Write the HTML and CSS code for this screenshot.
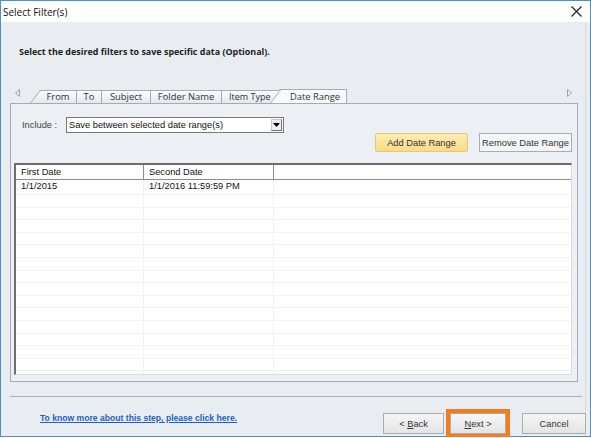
FILE: index.html
```html
<!DOCTYPE html>
<html lang="en">
<head>
    <meta charset="UTF-8">
    <title>Select Filter(s)</title>
    <link rel="stylesheet" href="styles.css">
</head>
<body>
    <div class="window">
        <div class="titlebar">
            <div class="title">Select Filter(s)</div>
            <svg class="close" width="11" height="11" viewBox="0 0 11 11">
                <path d="M0.5 0.5 L10.5 10.5 M10.5 0.5 L0.5 10.5" stroke="#222" stroke-width="1.2" fill="none"/>
            </svg>
        </div>
        <div class="content">
            <div class="intro">Select the desired filters to save specific data (Optional).</div>

            <div class="tabstrip">
                <svg class="arrow" width="5" height="8" viewBox="0 0 5 8">
                    <path d="M4.5 0.5 L0.5 4 L4.5 7.5 Z" fill="none" stroke="#9aa3ad"/>
                </svg>
                <div class="tabs">
                    <div class="tab slant first">From</div>
                    <div class="tab w-to">To</div>
                    <div class="tab w-subject">Subject</div>
                    <div class="tab w-folder">Folder Name</div>
                    <div class="tab w-item">Item Type</div>
                    <div class="tab slant active">Date Range</div>
                </div>
                <svg class="arrow" width="5" height="8" viewBox="0 0 5 8">
                    <path d="M0.5 0.5 L4.5 4 L0.5 7.5 Z" fill="none" stroke="#9aa3ad"/>
                </svg>
            </div>

            <div class="panel">
                <div class="include-row">
                    <label>Include :</label>
                    <div class="select">
                        <span>Save between selected date range(s)</span>
                        <div class="drop">
                            <svg width="7" height="4" viewBox="0 0 7 4"><path d="M0 0 L7 0 L3.5 4 Z" fill="#000"/></svg>
                        </div>
                    </div>
                </div>
                <div class="action-row">
                    <button class="btn-add">Add Date Range</button>
                    <button class="btn-remove">Remove Date Range</button>
                </div>
                <div class="grid">
                    <div class="grid-head">
                        <div class="col c1">First Date</div>
                        <div class="col c2">Second Date</div>
                        <div class="col c3"></div>
                    </div>
                    <div id="gridBody" class="grid-body"></div>
                </div>
            </div>

            <div class="footer">
                <a href="#" class="help">To know more about this step, please click here.</a>
                <div class="buttons">
                    <button class="btn">&lt; <u>B</u>ack</button>
                    <button class="btn next"><u>N</u>ext &gt;</button>
                    <button class="btn cancel">Cancel</button>
                </div>
            </div>
        </div>
    </div>

    <script>
        // Date ranges shown in the grid, padded with empty rows
        const ranges = [
            { first: '1/1/2015', second: '1/1/2016 11:59:59 PM' }
        ];
        const gridBody = document.getElementById('gridBody');
        for (let i = 0; i < 17; i++) {
            const r = ranges[i] || { first: '', second: '' };
            const row = document.createElement('div');
            row.classList.add('row');
            row.innerHTML = `
                <div class="col c1">${r.first}</div>
                <div class="col c2">${r.second}</div>
                <div class="col c3"></div>
            `;
            gridBody.appendChild(row);
        }
    </script>
</body>
</html>
```

FILE: styles.css
```css
body {
    margin: 0;
    padding: 0;
    background-color: #ffffff;
    font-family: "Liberation Sans", Arial, sans-serif;
}
.window {
    width: 591px;
    height: 437px;
    box-sizing: border-box;
    border: 1px solid #4f8fc4;
    display: flex;
    flex-direction: column;
    background-color: #e9edf2;
}
.titlebar {
    height: 21px;
    background-color: #ffffff;
    display: flex;
    justify-content: space-between;
    align-items: center;
    padding: 0 8px 0 2px;
}
.title {
    font-family: "Open Sans", sans-serif;
    font-size: 10px;
    color: #111;
}
.content {
    flex: 1;
    display: flex;
    flex-direction: column;
    padding: 0 0 0 9px;
    border-right: 1px solid #d5dbe2;
    margin-right: 4px;
}
.intro {
    font-family: "Open Sans", sans-serif;
    font-weight: bold;
    font-size: 8.95px;
    color: #222;
    margin: 24px 0 0 9px;
    line-height: 12px;
}

/* tab strip */
.tabstrip {
    margin-top: 31px;
    height: 14px;
    display: flex;
    align-items: flex-end;
    width: 568px;
}
.tabstrip .arrow {
    margin: 0 0 6px 5px;
}
.tabstrip .arrow:last-child {
    margin-left: auto;
    margin-right: 6px;
}
.tabs {
    display: flex;
    align-items: flex-end;
    margin-left: 8px;
    height: 14px;
}
.tab {
    position: relative;
    z-index: 0;
    height: 13px;
    box-sizing: border-box;
    border: 1px solid #a3abb4;
    border-bottom: none;
    border-left: none;
    background: linear-gradient(#fbfcfd, #e4e8ec);
    font-family: "Open Sans", sans-serif;
    font-size: 9.4px;
    color: #333;
    line-height: 12px;
    text-align: center;
    white-space: nowrap;
}
.tab.first {
    width: 37px;
    margin-left: 12px;
}
.tab.w-to { width: 25px; }
.tab.w-subject { width: 49px; }
.tab.w-folder { width: 71px; }
.tab.w-item { width: 59px; text-align: left; padding-left: 7px; font-size: 9px; }
.tab.active {
    width: 68px;
    height: 14px;
    margin-left: -2px;
    padding-left: 5px;
    background: #f8f9fb;
    z-index: 2;
    line-height: 13px;
}
.tab.slant::before {
    content: '';
    position: absolute;
    left: -9px;
    top: -1px;
    bottom: 0;
    width: 12px;
    background: inherit;
    border-left: 1px solid #a3abb4;
    border-top: 1px solid #a3abb4;
    transform: skewX(-38deg);
    transform-origin: bottom left;
    z-index: -1;
}
.tab.first::before {
    left: -10px;
    width: 14px;
}

/* panel */
.panel {
    width: 568px;
    height: 279px;
    box-sizing: border-box;
    border: 1px solid #a3abb4;
    background-color: #eceff3;
    padding: 13px 5px 0 3px;
    display: flex;
    flex-direction: column;
}
.include-row {
    display: flex;
    align-items: center;
    height: 16px;
    padding-left: 8px;
}
.include-row label {
    font-size: 9.3px;
    color: #444;
    width: 44px;
}
.select {
    width: 218px;
    height: 16px;
    box-sizing: border-box;
    border: 1px solid #7a7a7a;
    background-color: #ffffff;
    display: flex;
    align-items: center;
    justify-content: space-between;
    font-size: 9.3px;
    color: #111;
    padding-left: 2px;
}
.drop {
    width: 11px;
    height: 12px;
    margin-right: 1px;
    box-sizing: border-box;
    border: 1px solid #c8c8c8;
    border-right-color: #707070;
    border-bottom-color: #707070;
    background-color: #f0f0f0;
    display: flex;
    align-items: center;
    justify-content: center;
}
.action-row {
    display: flex;
    justify-content: flex-end;
    gap: 11px;
    height: 19px;
}
.action-row button {
    height: 19px;
    box-sizing: border-box;
    font-family: "Liberation Sans", Arial, sans-serif;
    font-size: 9.3px;
    color: #333;
    padding: 0;
}
.btn-add {
    width: 93px;
    background: linear-gradient(#fdecb4, #f8dc86);
    border: 1px solid #e4c877;
    border-radius: 2px;
}
.btn-remove {
    width: 93px;
    background: #f4f5f6;
    border: 1px solid #a9adb2;
}

/* grid */
.grid {
    margin-top: 11px;
    height: 212px;
    width: 558px;
    box-sizing: border-box;
    border-top: 2px solid #6e6e6e;
    border-left: 2px solid #6e6e6e;
    border-right: 1px solid #d8dbdf;
    border-bottom: 1px solid #d8dbdf;
    background-color: #ffffff;
    overflow: hidden;
}
.grid-head {
    display: flex;
    height: 14px;
    border-bottom: 1px solid #8c8c8c;
    font-size: 9.3px;
    color: #111;
}
.grid-head .col {
    border-right: 1px solid #8c8c8c;
    line-height: 14px;
}
.col {
    box-sizing: border-box;
    padding-left: 5px;
}
.c1 { width: 128px; }
.c2 { width: 130px; }
.c3 { flex: 1; border-right: none !important; }
.row {
    display: flex;
    height: 11.6px;
    border-bottom: 1px solid #f0f2f4;
    font-size: 9.3px;
    color: #111;
    line-height: 13px;
}
.row:first-child {
    height: 14px;
}
.row .col {
    border-right: 1px solid #f0f1f2;
}

/* footer */
.footer {
    margin-top: 14px;
    border-top: 1px solid #a9b0b8;
    width: 572px;
    display: flex;
    align-items: flex-start;
    justify-content: space-between;
    padding-top: 16px;
}
.help {
    margin: 0 0 0 30px;
    font-family: "Liberation Sans", Arial, sans-serif;
    font-weight: bold;
    font-size: 8.6px;
    line-height: 10px;
    color: #1b5fc9;
}
.buttons {
    display: flex;
    align-items: center;
}
.btn {
    height: 21px;
    box-sizing: border-box;
    border: 1px solid #acacac;
    background: linear-gradient(#f6f6f6, #e4e4e4);
    font-family: "Liberation Sans", Arial, sans-serif;
    font-size: 9.3px;
    color: #333;
    padding: 0;
    width: 61px;
}
.btn.next {
    width: 56px;
    margin-left: 6px;
    outline: 4px solid #f47c20;
    outline-offset: 0;
}
.btn.cancel {
    width: 64px;
    margin-left: 16px;
    margin-right: -4px;
}
```
